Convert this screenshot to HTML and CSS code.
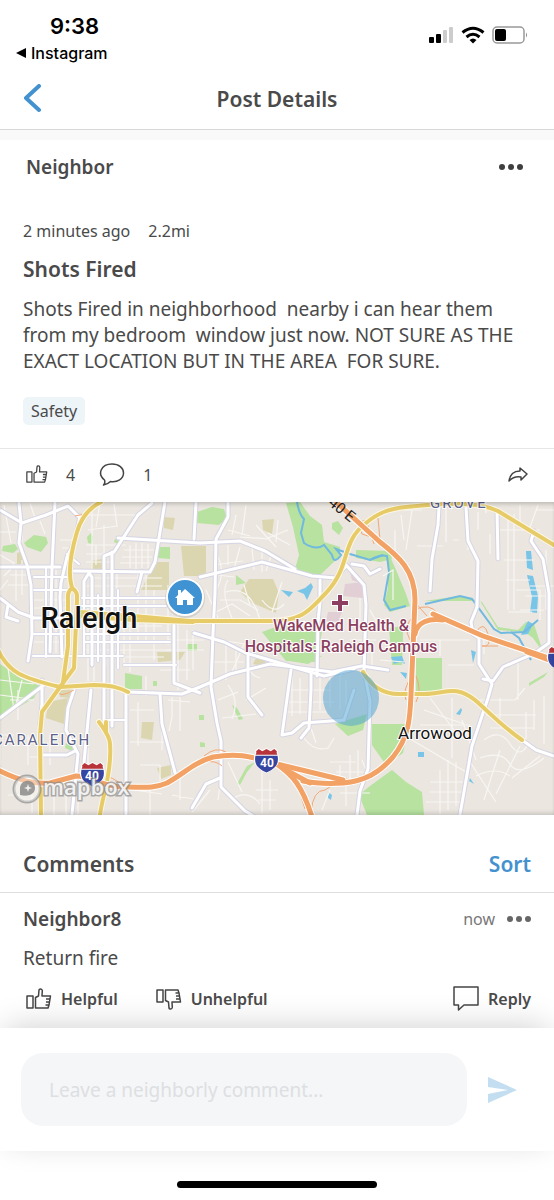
FILE: index.html
```
<!DOCTYPE html>
<html lang="en">
  <head>
    <meta charset="UTF-8" />
    <meta name="viewport" content="width=device-width, initial-scale=1" />
    <title>Post Details</title>
    <link rel="stylesheet" href="styles.css">
  </head>
  <body>
    <!-- shared icons -->
    <svg class="sprite" width="0" height="0" aria-hidden="true">
      <symbol id="thumb" viewBox="0 0 26 22">
        <path d="M1 8h6v12H1zM9.500 20V9.500L12.500 8l.5-6c.3-1.500 3-1.500 3.300.5l-.3 5.500h8.500l-.5 3-.5 3-.5 3-1 3zM20 11h4M20 14h3.500M19.500 17h3.500" />
      </symbol>
      <symbol id="shield" viewBox="0 0 26 26">
        <path d="M2 3.500 5 1l4 2 4-2 4 2 4-2 3 2.500c-1 3 2 5 1 10-1 6-7 9-12 12C8 22.500 2 19.500 1 13.500c-1-5 2-7 1-10z" fill="#fff" />
        <path d="M3 4 5.500 2 9 4l4-2 4 2 3.500-2L23 4c-.5 1.500 0 2.500.5 3.500h-21C3 6.500 3.500 5.500 3 4z" fill="#b9343a" />
        <path d="M2.300 8.500h21.400c1.500 9-3 12.500-10.700 16C5.300 21 .8 17.500 2.300 8.500z" fill="#3545a0" />
      </symbol>
    </svg>

    <div class="status-bar">
      <div class="clock">
        <div class="time">9:38</div>
        <a class="back-app" href="#">
          <svg width="10" height="10" viewBox="0 0 10 10"><path d="M0 5 10 0v10z" /></svg>
          Instagram
        </a>
      </div>
      <div class="indicators">
        <svg width="25" height="18" viewBox="0 0 25 18">
          <rect x="0" y="11" width="5" height="6" rx="1" />
          <rect x="7" y="8" width="5" height="9" rx="1" />
          <rect x="14" y="4" width="4" height="13" rx="1" fill="#ccc" />
          <rect x="20" y="1" width="4" height="16" rx="1" fill="#ccc" />
        </svg>
        <svg width="24" height="18" viewBox="0 0 24 18" fill="none" stroke="#000" stroke-width="3">
          <path d="M1.500 6.500q10.500-8.500 21 0M5.500 11q6.500-5.500 13 0" />
          <path d="M8.500 14q3.500-3 7 0L12 17.500z" fill="#000" stroke="none" />
        </svg>
        <svg width="36" height="18" viewBox="0 0 36 18">
          <rect x="1" y="1" width="31" height="16" rx="4" fill="none" stroke="#999" stroke-width="1.500" />
          <rect x="3" y="3" width="11" height="12" rx="2" />
          <path d="M34 6.500q2 2.500 0 5z" fill="#888" />
        </svg>
      </div>
    </div>

    <header class="nav">
      <button class="icon-btn" type="button" aria-label="Back">
        <svg width="20" height="30" viewBox="0 0 20 30" fill="none" stroke="#4392cf" stroke-width="4" stroke-linecap="round" stroke-linejoin="round">
          <path d="M17 2 4 14l13 12" />
        </svg>
      </button>
      <h1>Post Details</h1>
    </header>

    <main>
      <article class="post">
        <div class="author">
          <h2>Neighbor</h2>
          <button class="icon-btn" type="button" aria-label="More options">
            <svg width="24" height="6" viewBox="0 0 24 6" fill="#3f3f3f">
              <circle cx="3" cy="3" r="3" /><circle cx="12" cy="3" r="3" /><circle cx="21" cy="3" r="3" />
            </svg>
          </button>
        </div>
        <div class="meta"><span>2 minutes ago</span><span>2.2mi</span></div>
        <h3>Shots Fired</h3>
        <p class="text">Shots Fired in neighborhood  nearby i can hear them
from my bedroom  window just now. NOT SURE AS THE
EXACT LOCATION BUT IN THE AREA  FOR SURE.</p>
        <span class="tag">Safety</span>
      </article>

      <div class="actions">
        <button type="button" aria-label="Like">
          <svg class="line-icon" width="22" height="19"><use href="#thumb" /></svg>
          <span>4</span>
        </button>
        <button type="button" aria-label="Comments">
          <svg class="line-icon" width="26" height="24" viewBox="0 0 26 24">
            <path d="M5.500 17C-2 11 2 1 13 1c7 0 11.500 4 11.500 9 0 6-6 9.500-13 8.500-2 2-4.500 3-7 3.500q2-2 1-5z" />
          </svg>
          <span>1</span>
        </button>
        <button class="share" type="button" aria-label="Share">
          <svg class="line-icon" width="20" height="16" viewBox="0 0 20 16">
            <path d="M1 14C2 7 6 4 12 4V1l7 6-6 6v-3c-5-1-9 1-12 4z" />
          </svg>
        </button>
      </div>

      <div class="map">
        <svg viewBox="0 502 554 313" preserveAspectRatio="xMidYMid slice" role="img" aria-label="Map of Raleigh">
          <defs>
            <g id="streets">
              <path d="M0 510l22 13 24-8 22-9 12 12" />
              <path d="M19 503l2 20-2 20 8 22 4 20 1 50-4 26" />
              <path d="M80 516l-5 25-8 16-6 26-1 14 2 60" />
              <path d="M0 567h60M74 571l76 1 5-10 10-60M118 538l82 5M0 598l18 14 16 6h36M8 605l-2 12 12 4" />
              <path d="M55 503l-3 64-2 85M152 503l-14 12-24 37-10 4v166M112 552v174M92 665v-88l-3-4-5 8v16M142 572l-5 20" />
              <path d="M42 680v24l-2 20M0 718l44-33M74 690l-6 18-2 22 12 24-6 60M91 690l-7 72M42 755h25l8-4" />
              <path d="M126 692v122M128 692l54 2 18-7 30-13 40-10 62 8 30-6 26 4" />
              <path d="M174 625v58l26 10M160 694l2 30 14 52M196 503l-2 36" />
              <path d="M228 503v14l-12 22-1 54-2 40-2 54 6 36 4 18v46l24 24 20 12" />
              <path d="M200 543l40-2 25 10 30 18M200 577l62-15 50 14 24 2 10-12" />
              <path d="M194 633l30 9 22 11 78 23 30-7M248 655v42l14 18M291 670l-9 65 10-2 12-10 40-3 10-30" />
              <path d="M311 672v18l-2 38-8 10M320 580v22l-2 20-1 54M346 565l18 20 2 20-2 66 6 30-2 68-8 22-3 24M352 564l12 2 6 8 10-5" />
              <path d="M439 507l-1 18-6 34-2 32M466 507l2 34 10 20-1 46-6 15 2 12 6 4v26l13 20-4 14-16 48-14 80" />
              <path d="M497 510l1 49M534 531l-3 10 12 18 6 34v50l-14 10-32 14-10 14-10-2M522 740l14 10 18 6" />
              <path d="M192 808l14-24 14-6" />
            </g>
            <g id="blocks">
              <path d="M34 577h34M34 590h34M34 634h30M33 656h90M46 567v90" />
              <path d="M82 598h84M82 606h84M84 634h86M84 642h86M124 665h52M98 595v66M84 590v66M118 590v78" />
              <path d="M67 554l12 10M104 720h22" />
            </g>
            <g id="arterials">
              <path d="M101 502c-12 6-20 16-24 30-6 20-10 40-5 56-5 4-4 8-4 14v44l-5 36" />
              <path d="M72 588c6 4 5 8 5 12l-3 68-14 19-18 25-2 23 1 80" />
              <path d="M80 612l53 4 57 5h80c34 0 40-12 56-28 26-28 14-50 40-70 12-10 22-14 40-16 40-4 70-6 92 4l56 34" />
              <path d="M80 616l53 4 60 2" />
              <path d="M-2 650c10 22 24 28 62 37l34-2c16 0 24 2 34 7" />
              <path d="M99 722c12 16 12 20 11 36-1 24-8 40-10 57M106 722v10" />
              <path d="M363 672c8 14 20 22 36 22h26c20 0 30-10 50 6 14 12 24 24 47 40" />
            </g>
            <g id="freeways">
              <path d="M336 502l44 40c18 14 35 28 35 58l-4 95c-1 24-2 42-18 62-14 16-28 24-50 26-16 1-30 0-40-2" />
              <path d="M-2 770c24 12 38 14 52 13l26-7c16 0 24 11 51 11 16 0 26 2 40-4 18-10 26-20 46-26 24-4 36-1 56 5l74 18" />
              <path d="M278 765c14 10 24 20 34 52" />
              <path d="M433 614l50 22 71 24M415 634c2-12 14-16 28-14" />
              <path d="M284 769l26 14" />
              <path d="M527 652l22 8" />
            </g>
          </defs>

          <rect y="502" width="554" height="313" fill="#ebe6e0" />

          <!-- parks -->
          <g fill="#b7e2a0">
            <path d="M24 543l10-8 12 2 2 6-7 9-14-5z" />
            <path d="M3 546l12-2 3 5-5 4-11-2z" />
            <path d="M87 537l4-4 2 4-1 7-4-1zM115 539l6 3-3 2-4-2zM158 547h12v12l-12-1zM196 513h4v10l-3-2zM187 556l4-2v10l-4-1zM187 644h10v7h-11z" />
            <path d="M0 664l20 14 20 8-6 12L0 718z" />
            <path d="M125 673l17 3v13h-17zM153 681h4v5h-4zM66 743l8 4-2 4-7-3z" />
            <path d="M197 512l15-5 12 2 3 9-8 7-22-2z" />
            <path d="M286 503l14-1 10 14 12 9 2 17 16 5-1 10-20 19-24-7 4-14-6-28z" />
            <path d="M356 550l34 1 2 8-12 3-24-4z" />
            <path d="M332 523l6-2 5 7-4 7-7-6zM236 575l10 8-10 2z" />
            <path d="M388 552l8 18 10 24 4 12-20 6-6-7 4-17z" />
            <path d="M389 628l14-2v10l-1 29h-10zM262 632l22-8 38 8-6 30-30-1z" />
            <path d="M424 601l36-5 22 6 16 25 20 3 8-8 8 2 9 28-10-14-8-6-27-2-18-29z" />
            <path d="M282 653l40 3-14 8-18-3z" />
            <path d="M416 658h26v33h-26zM529 683l19-11-4 5-15 9z" />
            <path d="M335 724l32-10-4 16-15 6z" />
            <path d="M372 724h37l-6 29-17 12-14-20zM370 786l22-16 14 12 16 10 2 23h-57l-8-20z" />
            <path d="M232 705l5 3 6 11-4 1zM237 784l10-18 8-4-8 10-7 13zM199 715h5v5h-5zM200 742l5 1v4h-5z" />
          </g>
          <g fill="#dcd6b0">
            <path d="M164 517l11 1-2 12-9-2zM91 561l11-2v11l-10-1zM181 546h25v30h-22zM155 562h14v28h-28zM17 553l8-2v13h-8z" />
            <path d="M262 520l12-1-2 15-9-4zM240 592l9-13h24l6 14-3 20-24-10zM157 652h28l-5 8-22 2z" />
            <path d="M48 702l20-4-4 26-18-6zM142 722h12l-2 18-11-2zM157 768l14-3v10l-10 4zM256 658l10 0-1 9-12-3zM59 687l12 2-2 9-9-1z" />
          </g>
          <g fill="#e2cfd6">
            <path d="M345 584l18-2v16l-20-2zM350 572l8 2 4 10-10-4zM328 612h14l-4 10-12-1z" />
          </g>

          <!-- water -->
          <path fill="#79c5e8" d="M281 590l12 2-4 5zM297 591l8-3 6-5 2 4-6 13-3-6zM526 551h5l2 19-6-2zM527 575l6 1 5 20-1 17-7-1 2-15zM521 635l7-14 5 3-5 10zM391 657l11-1 3 8-5-2-6 2zM400 672l7 1-1 6zM456 714l5-6 1 2-2 5zM418 752h6v5h-6zM470 778l4 6-5-3zM328 792l4 3-1 5-3-2zM471 650l5 2-3 11z" />
          <g class="river">
            <path d="M297 502q2 12 7 17l-3 14 3 10q12 8 20 2l8 10q2 10 9 0l-5-6 14 5 20 6 13-5" />
            <path d="M370 560q10-6 17-4l2 16-5 28 6 10 16-4M425 604l35-8 12 3 22 30 7 4 23-1 14-12" />
            <path d="M511 632l8 6 12 22" />
          </g>

          <!-- side streets -->
          <g class="minor">
            <path d="M0 532h16M4 505l7 38M22 528v15M30 503l6 18M40 521l5 13M60 540h15M62 548h12M86 545h40M88 530l30-4M100 503l-4 24M114 504l3 22M88 515h50M86 554h28M92 503v70M104 525v46M96 545v20M86 562h28" />
            <path d="M130 545v23M136 543v26M142 543v25M148 544v24M124 550h30M122 557h30M120 563h30" />
            <path d="M0 555l14 8-6 9M4 576l10-10M0 590l8-10M16 565v36M22 560v35M10 575h22M8 585h22" />
            <path d="M34 600h34M34 608h34M34 642h30M56 567v86M90 600v60M106 606v60M124 606v60" />
            <path d="M82 578h80M84 586h78M84 626h78M84 650h90M84 657h80M88 595v86M94 595v86M117 570v100M130 610v62M138 574v70M146 574v66M154 590v70" />
            <path d="M178 610v80M187 630v50M168 585v60M193 630v40M168 640h36M166 650h38M160 670h30M146 676v20M168 700l22 2M172 697v20l-3 14M180 697v34" />
            <path d="M214 550q14 20 2 40M206 590l12 28M228 545v20M240 547l-6 22M252 548l2 22M262 552v20M272 553l-6 18M213 565l30-4M218 575l16 2" />
            <path d="M228 580q-8 12 4 38M220 600h20l18 10M226 592q24-8 34 28M216 612l16-8 18 12M250 605l-6-20M282 582l-10 30M262 600q12 16 22 4" />
            <path d="M236 515l-4 20M228 530l22 6M246 505l-4 30M256 525l20 22M240 537l30 2M278 520l-2 22M288 530l-20 8M290 545l-22-12" />
            <path d="M226 640v40M218 640l28 4M236 645v30M244 644l-12 28M214 662h30M250 652q-6 22 10 26M228 685q12 16 4 34M218 700l20-8M246 700l20-12M222 718l34-4" />
            <path d="M292 676v40M300 678v36M310 676v40M320 676v34M330 676v32M290 690h40M288 702h46M286 712h40M304 738q10 14 24 10l6-10M310 725l6 18M340 670v40M346 680v30" />
            <path d="M340 765v20M350 755v26M358 750v26M336 772h28M330 762h26M362 760l6 14M340 793h30M346 786v20M330 790l-8 20" />
            <path d="M222 770l-4 30M228 762l14 30M270 780v30M262 768v45M256 790h22M258 800h18M210 790l-18 22M230 800q18-12 30 4" />
            <path d="M0 765v-30l14 0M18 690v30M10 700h24M28 735v30M50 735v30M30 757h34M8 795h24v18M54 790v25M66 786v29M78 792v22M88 748v20M138 702v44M130 710h24M130 742h40M162 700v50M140 765h20v16M134 790l28 4M150 785v30M180 770v30M172 795l22 4" />
            <path d="M0 680l34 4M8 668l6 42M22 680l-6 24M0 695l30 4M422 510h-18M395 530v20M401 515l3 25M412 510l-6 40M417 546h26M446 506v36M459 540h-6M490 534v20M508 514v96M514 514v96M500 530h40M504 560h30M506 580h24M516 590h24v30M530 586h24M525 596h20M520 610h24M508 612h24M546 550v60" />
            <path d="M420 640h50M440 640v16M448 665h26M484 640v14M518 660v40M480 700h35l10-12M486 715h50M490 728h44M500 698v20M526 712v28M534 700v30M544 696v48M484 740q16-12 26 4t18 0M480 758q22-8 30 6t34-6M476 776q20-10 34 0M470 762l26 40M500 750l-16 50M520 746l-24 48M540 756l-28 22" />
            <path d="M430 698l30 40M424 710l40 14M420 725h50M452 698v60M412 740l54 32M440 770v44M448 760v50M456 762v44M430 782h36M430 792h34M426 802h36M462 720l14 40" />
            <path d="M468 520v30M478 512v18M520 505v20M538 505l-8 22M536 510h18M486 503v10M360 598v30M370 610l10 18M350 640h26M372 650v20M380 660l24 2M383 576l10-6v30" />
          </g>

          <!-- each road class is drawn twice, casing then fill -->
          <use href="#blocks" class="block-case" />
          <use href="#streets" class="street-case" />
          <use href="#blocks" class="block-fill" />
          <use href="#streets" class="street-fill" />

          <g class="ramp">
            <path d="M358 522l20-4 2 22-18-6zM366 520l8 24M413 600l14 16M414 610q16-8 24 4M410 640q-8-14 4-24M476 632q8-12 12 2t-6 12l16 0M204 756q12-10 22-4M204 762q12-2 18 4M406 700q-4-10 6-24M416 676q6 14 0 26M295 775q6 22 10 34M311 812q2-22 14-22l8-5M283 765q22 4 40 8t30 8M106 776q14 4 22 16M75 516l10-2M66 680q-10 6-8 12t16-2" />
          </g>

          <use href="#arterials" class="arterial-case" />
          <use href="#arterials" class="arterial-fill" />
          <use href="#freeways" class="freeway-case" />
          <use href="#freeways" class="freeway-fill" />

          <!-- post radius -->
          <circle cx="351" cy="698" r="28" fill="#4a9fd2" fill-opacity=".5" />

          <!-- labels -->
          <g class="place" text-anchor="middle">
            <text x="89" y="628" class="city">Raleigh</text>
            <text x="435" y="739" class="town">Arrowood</text>
          </g>
          <g class="district">
            <text x="-7" y="745">CARALEIGH</text>
            <text x="430" y="508">GROVE</text>
          </g>
          <text class="route" transform="translate(321 499) rotate(39)">I-40 E</text>
          <g class="hospital" text-anchor="middle">
            <path d="M338 595h4v6h6v4h-6v6h-4v-6h-6v-4h6z" />
            <text x="341" y="631">WakeMed Health &amp;</text>
            <text x="341" y="652">Hospitals: Raleigh Campus</text>
          </g>

          <!-- route shields -->
          <g class="shield" text-anchor="middle">
            <use href="#shield" x="79" y="761" width="27" height="27" />
            <text x="92" y="780">40</text>
            <use href="#shield" x="253" y="747" width="27" height="27" />
            <text x="267" y="767">40</text>
            <use href="#shield" x="546" y="645" width="27" height="27" />
          </g>

          <!-- home pin -->
          <circle cx="185" cy="598" r="20" fill="#8a8a8a" fill-opacity=".25" />
          <circle cx="185" cy="597" r="18" fill="#3f93d2" stroke="#fff" stroke-width="2" />
          <path d="M175 598l3-3v-5h3v3l4-4 10 9h-2v7h-6v-5h-4v5h-6v-7z" fill="#fff" />

          <!-- map attribution -->
          <g class="attribution">
            <circle cx="27" cy="789" r="13" fill-opacity=".4" />
            <path d="M20 795v-7c1-10 15-9 15 0 0 7-8 9-15 7z" class="drop" />
            <path d="M28 784l1 3 3 1-3 1-1 3-1-3-3-1 3-1z" stroke="none" />
            <text x="43" y="795">mapbox</text>
          </g>
        </svg>
      </div>

      <section class="comments">
        <div class="comments-head">
          <h3>Comments</h3>
          <button class="sort" type="button">Sort</button>
        </div>
        <div class="comment">
          <div class="comment-head">
            <h4>Neighbor8</h4>
            <span class="when">now</span>
            <button class="icon-btn" type="button" aria-label="Comment options">
              <svg width="24" height="6" viewBox="0 0 24 6" fill="#666">
                <circle cx="3" cy="3" r="3" /><circle cx="12" cy="3" r="3" /><circle cx="21" cy="3" r="3" />
              </svg>
            </button>
          </div>
          <p>Return fire</p>
          <div class="comment-actions">
            <button type="button">
              <svg class="line-icon" width="26" height="22"><use href="#thumb" /></svg>
              Helpful
            </button>
            <button type="button">
              <svg class="line-icon flip" width="26" height="22"><use href="#thumb" /></svg>
              Unhelpful
            </button>
            <button class="reply" type="button">
              <svg class="line-icon" width="26" height="26" viewBox="0 0 26 26">
                <path d="M1 1h24v18H11l-5.500 5V19H1z" />
              </svg>
              Reply
            </button>
          </div>
        </div>
      </section>
    </main>

    <form class="composer">
      <input type="text" name="comment" aria-label="Comment" placeholder="Leave a neighborly comment..." />
      <button class="icon-btn" type="submit" aria-label="Send">
        <svg width="30" height="28" viewBox="0 0 30 28" fill="#c3def0">
          <path d="M0 1l29 13L0 27v-9l20-4-20-3z" />
        </svg>
      </button>
    </form>
    <div class="home-bar"><span></span></div>
  </body>
</html>
```
FILE: styles.css
```
* {
  box-sizing: border-box;
}

body {
  margin: 0;
  font-family: "Noto Sans", "Open Sans", sans-serif;
  font-size: 19px;
  color: #4a4a4a;
  background: #fff;
}

h1,
h2,
h3,
h4,
p {
  margin: 0;
  font-weight: 600;
}

button {
  padding: 0;
  border: none;
  background: none;
  font: inherit;
  color: inherit;
  cursor: pointer;
}

svg {
  display: block;
}

.sprite {
  position: absolute;
}

.icon-btn {
  display: flex;
  align-items: center;
}

.line-icon {
  fill: none;
  stroke: #444;
  stroke-width: 1.5;
  stroke-linejoin: round;
}

.flip {
  transform: scaleY(-1);
}

/* status bar */
.status-bar {
  display: flex;
  justify-content: space-between;
  height: 68px;
  padding: 12px 26px 0 16px;
  font-family: Inter, sans-serif;
  color: #000;
}

.time {
  padding-left: 34px;
  font-size: 22px;
  font-weight: 600;
  line-height: 28px;
}

.back-app {
  display: flex;
  align-items: center;
  gap: 5px;
  font-size: 16px;
  font-weight: 500;
  line-height: 26px;
  color: #000;
  text-decoration: none;
}

.indicators {
  display: flex;
  gap: 7px;
  padding-top: 14px;
}

/* title bar */
.nav {
  display: grid;
  grid-template-columns: 40px 1fr 40px;
  align-items: center;
  height: 62px;
  padding: 0 22px;
  border-bottom: 1px solid #d8d8d8;
}

.nav h1 {
  font-size: 21px;
  text-align: center;
}

main {
  border-top: 10px solid #f9f9f9;
}

/* post */
.post {
  padding: 13px 23px 23px;
  border-bottom: 1px solid #e6e6e6;
}

.author {
  display: flex;
  justify-content: space-between;
  align-items: center;
  height: 28px;
  margin-bottom: 38px;
  padding: 0 8px 0 3px;
}

.author h2 {
  font-size: 19px;
  line-height: 28px;
}

.meta {
  display: flex;
  gap: 18px;
  font-size: 16px;
  line-height: 24px;
}

.post h3 {
  margin: 12px 0 13px;
  font-size: 21px;
  line-height: 28px;
}

.text {
  margin-bottom: 23px;
  font-weight: 400;
  line-height: 26px;
  white-space: pre-wrap;
}

.tag {
  display: inline-block;
  padding: 0 8px;
  border-radius: 5px;
  background: #eef5f9;
  font-size: 16px;
  line-height: 28px;
  vertical-align: top;
}

.actions {
  display: flex;
  gap: 24px;
  height: 53px;
  padding: 0 26px 2px;
}

.actions button {
  display: flex;
  align-items: center;
  gap: 18px;
  font-size: 16px;
}

.actions .share {
  margin-left: auto;
}

/* map */
.map {
  position: relative;
}

.map::after {
  content: "";
  position: absolute;
  inset: 0;
  box-shadow: inset 0 4px 4px -2px rgba(0, 0, 0, 0.2), inset 0 -4px 4px -2px rgba(0, 0, 0, 0.15);
}

.map svg {
  width: 100%;
}

.minor {
  fill: none;
  stroke: #f8f6f3;
  stroke-width: 1.2;
}

.river {
  fill: none;
  stroke: #70b9df;
  stroke-width: 2;
}

.block-case,
.block-fill,
.street-case,
.street-fill,
.arterial-case,
.arterial-fill,
.freeway-case,
.freeway-fill {
  fill: none;
  stroke-linecap: round;
  stroke-linejoin: round;
}

.block-case {
  stroke: #dcdbe8;
  stroke-width: 4;
}

.block-fill {
  stroke: #fff;
  stroke-width: 2;
}

.street-case {
  stroke: #d5d4e3;
  stroke-width: 5;
}

.street-fill {
  stroke: #fff;
  stroke-width: 3;
}

.arterial-case {
  stroke: #fdf8e6;
  stroke-width: 6;
}

.arterial-fill {
  stroke: #e6cb68;
  stroke-width: 4;
}

.freeway-case {
  stroke: #fff;
  stroke-width: 7;
}

.freeway-fill {
  stroke: #f3a266;
  stroke-width: 5;
}

.ramp {
  fill: none;
  stroke: #f2a877;
  stroke-width: 1;
}

.place {
  fill: #111;
  stroke: #fff;
  stroke-width: 2;
  paint-order: stroke;
  font-family: Roboto, sans-serif;
}

.city {
  font-size: 29px;
  font-weight: 500;
}

.town {
  font-size: 17px;
}

.district {
  fill: #5c5f88;
  stroke: #fff;
  stroke-width: 2;
  paint-order: stroke;
  font-family: Roboto, sans-serif;
  font-size: 15px;
  letter-spacing: 2px;
}

.route {
  fill: #222;
  font-family: Roboto, sans-serif;
  font-size: 15px;
}

.hospital {
  fill: #8c3f61;
  stroke: #fff;
  stroke-width: 2;
  paint-order: stroke;
  font-family: Roboto, sans-serif;
  font-size: 16px;
  font-weight: 500;
}

.shield {
  fill: #fff;
  font-family: Roboto, sans-serif;
  font-size: 12px;
  font-weight: 700;
}

.attribution {
  fill: #fff;
  fill-opacity: 0.85;
  stroke: #8b8b8b;
  stroke-opacity: 0.7;
  stroke-width: 3;
  font-family: "Open Sans", sans-serif;
  font-size: 22px;
  font-weight: 600;
  paint-order: stroke;
}

.drop {
  fill: #8b8b8b;
  stroke: none;
}

/* comments */
.comments-head {
  display: flex;
  justify-content: space-between;
  align-items: center;
  height: 78px;
  padding: 20px 23px 0;
  border-bottom: 1px solid #dedede;
}

.comments-head h3,
.sort {
  font-size: 21px;
  font-weight: 600;
}

.sort {
  color: #4392cf;
}

.comment {
  padding: 13px 23px 15px;
}

.comment-head {
  display: flex;
  align-items: center;
  gap: 12px;
  height: 26px;
}

.comment-head h4 {
  margin-right: auto;
  font-size: 19px;
}

.when {
  font-size: 16px;
  color: #777;
}

.comment p {
  margin: 13px 0 14px;
  font-size: 19px;
  font-weight: 400;
  line-height: 26px;
}

.comment-actions {
  display: flex;
  gap: 38px;
  padding-left: 3px;
}

.comment-actions button {
  display: flex;
  align-items: center;
  gap: 9px;
  height: 28px;
  font-size: 16px;
  font-weight: 600;
}

.comment-actions .reply {
  margin-left: auto;
}

/* comment box */
.composer {
  display: flex;
  align-items: center;
  gap: 21px;
  padding: 25px 36px 25px 21px;
  background: #fff;
  box-shadow: 0 -6px 32px -6px rgba(0, 0, 0, 0.2);
}

.composer input {
  flex: 1;
  min-width: 0;
  height: 73px;
  padding: 0 28px;
  border: none;
  border-radius: 22px;
  background: #f5f6f8;
  font: inherit;
}

.composer input::placeholder {
  color: #dddfe2;
}

.home-bar {
  padding: 30px 0 12px;
}

.home-bar span {
  display: block;
  width: 36%;
  height: 7px;
  margin: 0 auto;
  border-radius: 4px;
  background: #000;
}
```
